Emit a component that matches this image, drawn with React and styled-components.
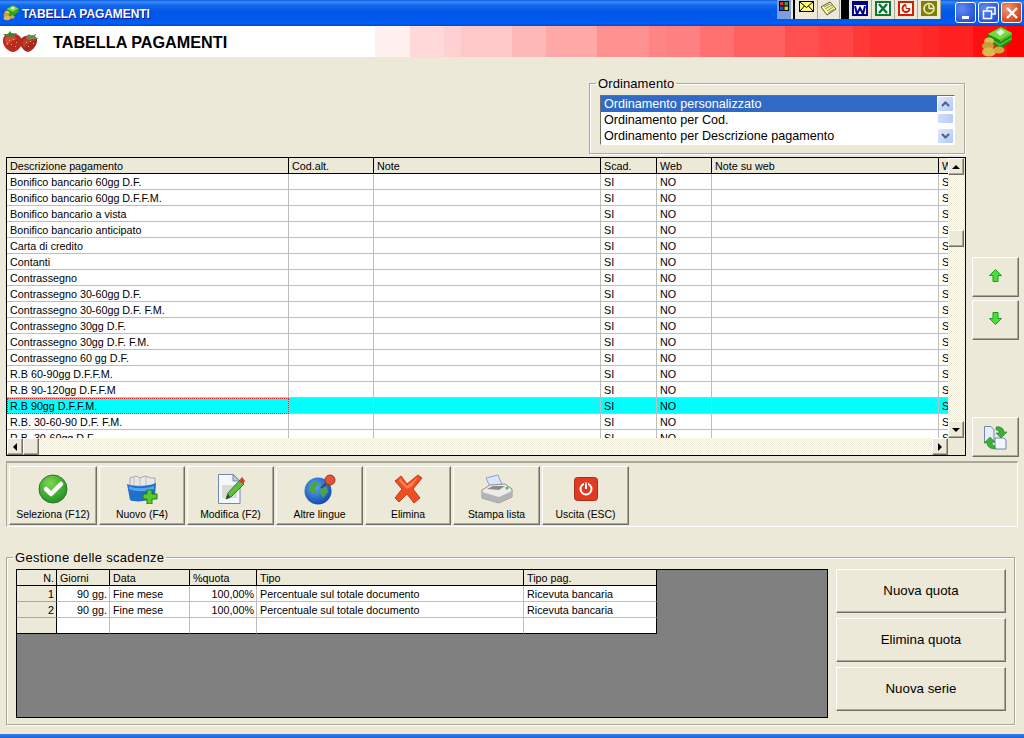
import React from 'react'
import styled, { createGlobalStyle } from 'styled-components'

const GlobalStyle = createGlobalStyle`
    html, body {
        margin: 0;
        padding: 0;
        background: #ECE9D8;
    }
    * {
        box-sizing: border-box;
    }
`

const FONT = `"Liberation Sans", Arial, sans-serif`
const DITHER = `repeating-conic-gradient(#ECE9D8 0 25%, #fff 0 50%) 0 0 / 2px 2px`

const HEADER_STEPS = [
    ['#FFFFFF', 375], ['#FFF0F0', 410], ['#FFD9D9', 444], ['#FFD0D0', 461], ['#FFC8C8', 512],
    ['#FFB8B8', 546], ['#FFA8A8', 597], ['#FF9090', 649], ['#FF8585', 666], ['#FF8080', 700],
    ['#FF7070', 734], ['#FF6060', 785], ['#FF5050', 819], ['#FF4545', 853], ['#FF3838', 870],
    ['#FF3030', 922], ['#FF2828', 939], ['#FF2020', 973], ['#FF1010', 1007], ['#FF0000', 1024],
]

const headerGradient = () => {
    let from = 0
    const parts = HEADER_STEPS.map(([color, to]) => {
        const part = `${color} ${from}px ${to}px`
        from = to
        return part
    })
    return `linear-gradient(90deg, ${parts.join(', ')})`
}

const payments = [
    'Bonifico bancario 60gg D.F.',
    'Bonifico bancario 60gg D.F.F.M.',
    'Bonifico bancario a vista',
    'Bonifico bancario anticipato',
    'Carta di credito',
    'Contanti',
    'Contrassegno',
    'Contrassegno 30-60gg D.F.',
    'Contrassegno 30-60gg D.F. F.M.',
    'Contrassegno 30gg D.F.',
    'Contrassegno 30gg D.F. F.M.',
    'Contrassegno 60 gg D.F.',
    'R.B 60-90gg D.F.F.M.',
    'R.B 90-120gg D.F.F.M',
    'R.B 90gg D.F.F.M.',
    'R.B. 30-60-90 D.F. F.M.',
    'R.B. 30-60gg D.F.',
]

const mainCols = [282, 85, 227, 56, 55, 227, 10]
const quotaCols = [40, 53, 80, 67, 267, 133]

const StrawberryIcon = () => (
    <svg width="38" height="22" viewBox="0 0 38 22">
        <path d="M21 6 C27 3 34 4 35 8 C36 13 31 20 26 21 C21 20 17 14 18 9Z" fill="#A8281C" />
        <path d="M22 8 C26 6 31 7 33 9 C29 10 25 13 22 17 C20 14 20 10 22 8Z" fill="#C43A28" />
        <path d="M24 6 L27 3 L29 5 L34 3 L33 6 L37 8 L31 8 L28 9 L25 8Z" fill="#6E8A4C" />
        <path d="M5 3 C11 1 19 4 20 9 C21 14 16 21 11 21 C6 21 0 14 1 9 C1 6 3 4 5 3Z" fill="#B82C1E" />
        <path d="M5 5 C9 4 13 5 15 8 C11 9 7 12 5 15 C3 12 2 7 5 5Z" fill="#D84830" />
        <path d="M1 3 L6 3 L8 0 L10 3 L15 2 L13 5 L9 6 L5 6Z" fill="#4F7C30" />
        <path d="M7 9h1v1H7z M11 8h1v1h-1z M14 11h1v1h-1z M9 13h1v1H9z M13 15h1v1h-1z M5 12h1v1H5z M24 11h1v1h-1z M28 10h1v1h-1z M31 12h1v1h-1z M26 15h1v1h-1z" fill="#F0B090" />
    </svg>
)

const MoneyIcon = ({ size = 32 }) => (
    <svg width={size} height={size} viewBox="0 0 32 32">
        <path d="M7 8 L20 1 L31 7 L31 15 L19 23 L7 15Z" fill="#1F8A16" />
        <path d="M7 8 L20 1 L31 7 L19 14Z" fill="#6FDC3C" />
        <path d="M15 6 L20 3 L24 6 L19 10Z" fill="#E4EEDC" />
        <path d="M19 14 L31 7 L31 9 L19 16Z M19 18 L31 11 L31 13 L19 20Z" fill="#52C030" />
        <path d="M7 11 L19 18 L19 20 L7 13Z" fill="#52C030" />
        <ellipse cx="8" cy="15" rx="5" ry="3.500" fill="#E0BE52" />
        <ellipse cx="7" cy="20" rx="6" ry="4" fill="#C89E36" />
        <ellipse cx="8" cy="26" rx="7" ry="4.500" fill="#DDB84A" />
        <ellipse cx="18" cy="24" rx="5.500" ry="3.500" fill="#CFA93C" />
    </svg>
)

const WindowsFlag = () => (
    <svg width="10" height="10" viewBox="0 0 10 10">
        <rect width="10" height="10" fill="#000" />
        <rect x="1" y="1" width="3.500" height="3.500" fill="#E03020" />
        <rect x="5.500" y="1" width="3.500" height="3.500" fill="#30A040" />
        <rect x="1" y="5.500" width="3.500" height="3.500" fill="#2050D0" />
        <rect x="5.500" y="5.500" width="3.500" height="3.500" fill="#E8C820" />
    </svg>
)

const MailIcon = () => (
    <svg width="15" height="11" viewBox="0 0 15 11">
        <rect x=".5" y=".5" width="14" height="10" fill="#FFFF80" stroke="#000" />
        <path d="M1 1 L7.5 6.500 L14 1 M1 10 L5.500 5 M14 10 L9.500 5" fill="none" stroke="#000" />
    </svg>
)

const NoteIcon = () => (
    <svg width="17" height="15" viewBox="0 0 17 15">
        <path d="M1 6 L10 1 L16 8 L7 14Z" fill="#FFFF80" stroke="#555" />
        <path d="M4 6 L10 3 M5 8 L12 4 M7 10 L13 6 M8 12 L14 8" stroke="#888" />
    </svg>
)

const WordIcon = () => (
    <svg width="16" height="15" viewBox="0 0 16 15">
        <rect x="1" y="1" width="14" height="13" fill="#fff" stroke="#00008B" strokeWidth="2" />
        <rect x="1" y="1" width="14" height="3" fill="#00008B" />
        <path d="M3 5 L5 13 L8 7 L11 13 L13 5" fill="none" stroke="#00008B" strokeWidth="2" />
    </svg>
)

const ExcelIcon = () => (
    <svg width="16" height="15" viewBox="0 0 16 15">
        <rect x="1" y="1" width="14" height="13" fill="#fff" stroke="#0A7A30" strokeWidth="2" />
        <path d="M4 3 L12 12 M12 3 L4 12" stroke="#0A7A30" strokeWidth="2.500" />
    </svg>
)

const PptIcon = () => (
    <svg width="16" height="15" viewBox="0 0 16 15">
        <rect x="1" y="1" width="14" height="13" fill="#fff" stroke="#D02000" strokeWidth="2" />
        <circle cx="8" cy="7.500" r="3.500" fill="none" stroke="#D02000" strokeWidth="2" />
        <path d="M8 7.500 V3 H13 V7.500Z" fill="#fff" />
        <path d="M8 4 V7.500 H12" fill="none" stroke="#D02000" />
    </svg>
)

const ChartIcon = () => (
    <svg width="16" height="15" viewBox="0 0 16 15">
        <rect width="16" height="15" fill="#808000" />
        <circle cx="8" cy="7.500" r="5" fill="#808000" stroke="#F0F0D8" strokeWidth="1.500" />
        <path d="M8 7.500 V3.500 M8 7.500 H12" stroke="#F0F0D8" strokeWidth="1.500" />
    </svg>
)

const CheckIcon = () => (
    <svg width="30" height="30" viewBox="0 0 30 30">
        <defs>
            <radialGradient id="chk" cx=".4" cy=".3" r=".8">
                <stop offset="0" stopColor="#7ED64E" />
                <stop offset="1" stopColor="#148A1E" />
            </radialGradient>
        </defs>
        <circle cx="15" cy="15" r="14" fill="url(#chk)" stroke="#2A7A28" />
        <path d="M8 15 L13 20 L23 10" fill="none" stroke="#fff" strokeWidth="4.500" strokeLinejoin="round" strokeLinecap="round" />
    </svg>
)

const NewIcon = () => (
    <svg width="32" height="30" viewBox="0 0 32 30">
        <path d="M4 4 L10 2 L14 4 L19 2 L25 4 L29 4 L29 12 L4 12Z" fill="#E8E8E8" stroke="#A8A8A8" />
        <path d="M8 2 V11 M14 3 V11 M20 3 V11" stroke="#BDBDBD" />
        <path d="M1 10 C8 13 20 13 30 9 L29 22 C26 27 10 29 4 26Z" fill="#1E6FD0" />
        <path d="M3 12 C10 15 18 15 28 12 L28 15 C18 18 10 18 3 15Z" fill="#5AA4EE" />
        <path d="M21 16 H26 V20 H31 V25 H26 V30 H21 V25 H17 V20 H21Z" fill="#5BC82C" stroke="#1E7E14" />
    </svg>
)

const EditIcon = () => (
    <svg width="28" height="30" viewBox="0 0 28 30">
        <path d="M1.500 .5 H16 L23 7 V29.500 H1.500Z" fill="#F4F7FC" stroke="#7288B4" />
        <path d="M16 .5 V7 H23Z" fill="#BCCBE6" stroke="#7288B4" />
        <rect x="5" y="11" width="15" height="13" fill="#D9DBD8" />
        <path d="M9 25 L11 19 L23 6 L27 10 L14 23Z" fill="#5FBE3C" stroke="#2F7E22" />
        <path d="M22 7 L25 3 L28 7 L26 10Z" fill="#D83A24" />
        <path d="M9 25 L11 20 L13 23Z" fill="#3B3B3B" />
    </svg>
)

const GlobeIcon = () => (
    <svg width="32" height="31" viewBox="0 0 32 31">
        <defs>
            <radialGradient id="glb" cx=".4" cy=".35" r=".75">
                <stop offset="0" stopColor="#58A8F0" />
                <stop offset="1" stopColor="#0A3FA8" />
            </radialGradient>
        </defs>
        <circle cx="14" cy="17" r="13.500" fill="url(#glb)" />
        <path d="M5 11 L12 7 L15 10 L11 14 L13 18 L9 20 L5 16Z M17 14 L23 13 L24 18 L19 24 L16 19Z" fill="#4EA24A" />
        <path d="M17 14 L25 7" stroke="#444" strokeWidth="2" />
        <circle cx="26" cy="6" r="5" fill="#E0563A" stroke="#B03020" />
    </svg>
)

const DeleteIcon = () => (
    <svg width="30" height="30" viewBox="0 0 30 30">
        <path d="M2 7 L8 2 L14 10 L25 1 L29 4 L20 15 L27 24 L21 29 L14 20 L6 28 L2 24 L9 15Z" fill="#EE4E22" stroke="#C83A18" />
        <path d="M7 4 L14 12 L25 3 L19 12 L14 15 L6 7Z" fill="#FF8056" />
    </svg>
)

const PrinterIcon = () => (
    <svg width="32" height="30" viewBox="0 0 32 30">
        <path d="M5 4 L17 1 L22 13 L10 15Z" fill="#D7E6FA" stroke="#8AA2C4" />
        <path d="M1 16 L9 11 L24 10 L31 15 L31 23 L18 29 L1 24Z" fill="#ECECEC" stroke="#8E8E8E" />
        <path d="M1 18 L18 23 L31 17 L31 23 L18 29 L1 24Z" fill="#B4B4B4" />
        <path d="M6 15 L12 12 L24 12 L18 16Z" fill="#8C8C8C" />
        <circle cx="26" cy="14" r="1.500" fill="#3CC03C" />
    </svg>
)

const PowerIcon = () => (
    <svg width="24" height="24" viewBox="0 0 24 24">
        <rect width="23" height="23" x=".5" y=".5" rx="3" fill="#E03A22" stroke="#B02A18" />
        <circle cx="12" cy="12" r="5.500" fill="none" stroke="#fff" strokeWidth="2" />
        <path d="M12 6 V12" stroke="#E03A22" strokeWidth="4" />
        <path d="M12 6.500 V12" stroke="#fff" strokeWidth="2" />
    </svg>
)

const ArrowIcon = ({ down }) => (
    <svg width="13" height="13" viewBox="0 0 13 13">
        <path
            d={down
                ? 'M6.500 12.500 L.5 6.500 H4 V.5 H9 V6.500 H12.500Z'
                : 'M6.500 .5 L12.500 6.500 H9 V12.500 H4 V6.500 H.5Z'}
            fill="#4CDC3C"
            stroke="#18A018"
        />
    </svg>
)

const RefreshIcon = () => (
    <svg width="24" height="24" viewBox="0 0 24 24">
        <path d="M.5 .5 H7 L10 4 V16 H.5Z" fill="#E8EEF8" stroke="#6E86B8" />
        <path d="M11 12 H20 L22 14 V23 H11Z" fill="#F2F5FB" stroke="#6E86B8" />
        <path d="M12 1 C17 0 20 3 20 6 H23 L17 12 L12 7 H15 C15 5 14 4 12 4Z" fill="#3AB03A" stroke="#187018" strokeWidth=".5" />
        <path d="M11 23 C6 23 3 20 3 17 H0 L6 11 L11 16 H8 C8 18 9 20 11 20Z" fill="#3AB03A" stroke="#187018" strokeWidth=".5" />
    </svg>
)

const tools = [
    { label: 'Seleziona (F12)', icon: <CheckIcon />, width: 88 },
    { label: 'Nuovo (F4)', icon: <NewIcon />, width: 86 },
    { label: 'Modifica (F2)', icon: <EditIcon />, width: 87 },
    { label: 'Altre lingue', icon: <GlobeIcon />, width: 87 },
    { label: 'Elimina', icon: <DeleteIcon />, width: 86 },
    { label: 'Stampa lista', icon: <PrinterIcon />, width: 87 },
    { label: 'Uscita (ESC)', icon: <PowerIcon />, width: 87 },
]

function ColGroup({ cols }) {
    return (
        <colgroup>
            {cols.map((w, i) => <Col key={i} $w={w} />)}
        </colgroup>
    )
}

export default function App() {
    return (
        <>
            <GlobalStyle />
            <Page>
                <TitleBar>
                    <MoneyIcon size={16} />
                    <TitleText>TABELLA PAGAMENTI</TitleText>
                    <Tray>
                        <FlagCell><WindowsFlag /></FlagCell>
                        <BlackGap $w={2} $left={2} $right={1} />
                        <TrayButton $w={22}><MailIcon /></TrayButton>
                        <TrayButton $w={22}><NoteIcon /></TrayButton>
                        <BlackGap $w={8} $left={1} />
                        <TrayButton $w={23}><WordIcon /></TrayButton>
                        <TrayButton $w={23}><ExcelIcon /></TrayButton>
                        <TrayButton $w={23}><PptIcon /></TrayButton>
                        <TrayButton $w={23}><ChartIcon /></TrayButton>
                    </Tray>
                    <WindowButtons>
                        <WindowButton>
                            <svg width="12" height="12" viewBox="0 0 12 12"><rect x="2" y="9" width="7" height="3" fill="#fff" /></svg>
                        </WindowButton>
                        <WindowButton>
                            <svg width="14" height="14" viewBox="0 0 14 14">
                                <path d="M5 1.500 H13 V8 H10 M5 1.500 V4" fill="none" stroke="#fff" strokeWidth="1.500" />
                                <rect x="1.500" y="5" width="8" height="7.500" fill="none" stroke="#fff" strokeWidth="1.500" />
                            </svg>
                        </WindowButton>
                        <CloseButton>
                            <svg width="14" height="14" viewBox="0 0 14 14"><path d="M2 2 L12 12 M12 2 L2 12" stroke="#fff" strokeWidth="2.400" /></svg>
                        </CloseButton>
                    </WindowButtons>
                </TitleBar>

                <AppHeader>
                    <StrawberryIcon />
                    <HeaderTitle>TABELLA PAGAMENTI</HeaderTitle>
                    <HeaderLogo><MoneyIcon /></HeaderLogo>
                </AppHeader>

                <Content>
                    <OrderRow>
                        <OrderGroup>
                            <OrderLegend>Ordinamento</OrderLegend>
                            <ListBox>
                                <ListItems>
                                    <ListItem $selected>Ordinamento personalizzato</ListItem>
                                    <ListItem>Ordinamento per Cod.</ListItem>
                                    <ListItem>Ordinamento per Descrizione pagamento</ListItem>
                                </ListItems>
                                <ListScroll>
                                    <XpScrollBtn>
                                        <svg width="9" height="6" viewBox="0 0 9 6"><path d="M1 5 L4.500 1.500 L8 5" fill="none" stroke="#4D6185" strokeWidth="2" /></svg>
                                    </XpScrollBtn>
                                    <XpThumb />
                                    <XpScrollBtn $last>
                                        <svg width="9" height="6" viewBox="0 0 9 6"><path d="M1 1 L4.500 4.500 L8 1" fill="none" stroke="#4D6185" strokeWidth="2" /></svg>
                                    </XpScrollBtn>
                                </ListScroll>
                            </ListBox>
                        </OrderGroup>
                    </OrderRow>

                    <GridRow>
                        <GridView>
                            <GridTop>
                                <GridClip>
                                    <DataTable>
                                        <ColGroup cols={mainCols} />
                                        <thead>
                                            <tr>
                                                <HeadCell>Descrizione pagamento</HeadCell>
                                                <HeadCell>Cod.alt.</HeadCell>
                                                <HeadCell>Note</HeadCell>
                                                <HeadCell>Scad.</HeadCell>
                                                <HeadCell>Web</HeadCell>
                                                <HeadCell>Note su web</HeadCell>
                                                <HeadCell>W</HeadCell>
                                            </tr>
                                        </thead>
                                        <tbody>
                                            {payments.map((name, i) => {
                                                const current = i === 14
                                                return (
                                                    <tr key={name}>
                                                        <BodyCell $current={current} $focus={current}>{name}</BodyCell>
                                                        <BodyCell $current={current} />
                                                        <BodyCell $current={current} />
                                                        <BodyCell $current={current}>SI</BodyCell>
                                                        <BodyCell $current={current}>NO</BodyCell>
                                                        <BodyCell $current={current} />
                                                        <BodyCell $current={current}>S</BodyCell>
                                                    </tr>
                                                )
                                            })}
                                        </tbody>
                                    </DataTable>
                                </GridClip>
                                <VScroll>
                                    <ClassicBtn><ArrowGlyph $dir="up" /></ClassicBtn>
                                    <VTrack>
                                        <VThumb />
                                    </VTrack>
                                    <ClassicBtn><ArrowGlyph $dir="down" /></ClassicBtn>
                                </VScroll>
                            </GridTop>
                            <HScroll>
                                <ClassicBtn><ArrowGlyph $dir="left" /></ClassicBtn>
                                <HThumb />
                                <HTrack />
                                <ClassicBtn><ArrowGlyph $dir="right" /></ClassicBtn>
                                <Corner />
                            </HScroll>
                        </GridView>
                        <SideColumn>
                            <SideButton $lift={3}><ArrowIcon /></SideButton>
                            <SideButton $lift={3}><ArrowIcon down /></SideButton>
                            <SideSpacer />
                            <SideButton $drop={2}><RefreshIcon /></SideButton>
                        </SideColumn>
                    </GridRow>

                    <Toolbar>
                        {tools.map(t => (
                            <ToolButton key={t.label} $w={t.width}>
                                <ToolIcon>{t.icon}</ToolIcon>
                                <span>{t.label}</span>
                            </ToolButton>
                        ))}
                    </Toolbar>

                    <DueGroup>
                        <DueLegend>Gestione delle scadenze</DueLegend>
                        <DueBody>
                            <GreyPane>
                                <QuotaTable>
                                    <ColGroup cols={quotaCols} />
                                    <thead>
                                        <tr>
                                            <HeadCell $right>N.</HeadCell>
                                            <HeadCell>Giorni</HeadCell>
                                            <HeadCell>Data</HeadCell>
                                            <HeadCell>%quota</HeadCell>
                                            <HeadCell>Tipo</HeadCell>
                                            <HeadCell>Tipo pag.</HeadCell>
                                        </tr>
                                    </thead>
                                    <tbody>
                                        {[1, 2].map(n => (
                                            <tr key={n}>
                                                <RowHead>{n}</RowHead>
                                                <BodyCell $right>90 gg.</BodyCell>
                                                <BodyCell>Fine mese</BodyCell>
                                                <BodyCell $right>100,00%</BodyCell>
                                                <BodyCell>Percentuale sul totale documento</BodyCell>
                                                <BodyCell>Ricevuta bancaria</BodyCell>
                                            </tr>
                                        ))}
                                        <tr>
                                            <RowHead />
                                            <BodyCell /><BodyCell /><BodyCell /><BodyCell /><BodyCell />
                                        </tr>
                                    </tbody>
                                </QuotaTable>
                            </GreyPane>
                            <QuotaButtons>
                                <QuotaButton>Nuova quota</QuotaButton>
                                <QuotaButton>Elimina quota</QuotaButton>
                                <QuotaButton>Nuova serie</QuotaButton>
                            </QuotaButtons>
                        </DueBody>
                    </DueGroup>
                </Content>
                <BottomEdge />
            </Page>
        </>
    )
}

const raised = `
    background: #ECE9D8;
    border: 1px solid;
    border-color: #fff #716F64 #716F64 #fff;
    box-shadow: inset -1px -1px 0 #ACA899;
`

const Col = styled.col`
    width: ${p => p.$w}px;
`

const Page = styled.div`
    width: 1024px;
    height: 738px;
    display: flex;
    flex-direction: column;
    overflow: hidden;
    background: #ECE9D8;
    font-family: ${FONT};
    color: #000;
`

const TitleBar = styled.div`
    height: 26px;
    flex: none;
    display: flex;
    align-items: flex-start;
    padding: 5px 2px 0 3px;
    gap: 3px;
    background: linear-gradient(180deg, #0A5AE0 0, #3C8CF5 2px, #1468EC 5px, #0058E8 12px, #0058EE 20px, #0060F8 23px, #0048D0 26px);
`

const TitleText = styled.div`
    font: bold 12px/16px ${FONT};
    color: #fff;
    text-shadow: 1px 1px 0 #0F1089;
    letter-spacing: -.08px;
    white-space: nowrap;
    padding-top: 1px;
`

const Tray = styled.div`
    display: flex;
    height: 19px;
    margin: -5px 0 0 auto;
    background: #ECE9D8;
`

const FlagCell = styled.div`
    width: 14px;
    padding-top: 1px;
    background: #7C9DE0;
    display: flex;
    justify-content: center;
`

const BlackGap = styled.div`
    width: ${p => p.$w}px;
    background: #000;
    margin-left: ${p => p.$left || 0}px;
    margin-right: ${p => p.$right || 0}px;
`

const TrayButton = styled.div`
    width: ${p => p.$w}px;
    padding-top: 1px;
    background: #ECE9D8;
    border-right: 1px solid #ACA899;
    display: flex;
    justify-content: center;
`

const WindowButtons = styled.div`
    display: flex;
    gap: 2px;
    margin: -3px 0 0 11px;
`

const WindowButton = styled.div`
    width: 21px;
    height: 21px;
    border: 1px solid #fff;
    border-radius: 3px;
    background: radial-gradient(circle at 30% 30%, #5E8CF0, #2450D8 80%);
    display: flex;
    align-items: center;
    justify-content: center;
`

const CloseButton = styled(WindowButton)`
    background: radial-gradient(circle at 30% 30%, #F09878, #D03C14 80%);
`

const AppHeader = styled.div`
    height: 31px;
    flex: none;
    display: flex;
    align-items: center;
    padding-left: 2px;
    background: ${headerGradient()};
`

const HeaderTitle = styled.h1`
    margin: 0 0 0 13px;
    font: bold 16.200px/20px ${FONT};
`

const HeaderLogo = styled.div`
    margin-left: auto;
    margin-right: 11px;
    display: flex;
`

const Content = styled.div`
    flex: 1;
    display: flex;
    flex-direction: column;
    padding: 19px 5px 0 6px;
    min-height: 0;
`

const OrderRow = styled.div`
    display: flex;
    justify-content: flex-end;
    padding-right: 54px;
    height: 81px;
    flex: none;
`

const OrderGroup = styled.fieldset`
    margin: 0;
    padding: 0 9px 0 10px;
    width: 376px;
    height: 78px;
    border: 1px solid #ACA899;
    box-shadow: inset 1px 1px 0 #fff, 1px 1px 0 #fff;
`

const OrderLegend = styled.legend`
    font: 13px/15px ${FONT};
    letter-spacing: .1px;
    padding: 0 2px;
    margin-left: -4px;
`

const ListBox = styled.div`
    height: 50px;
    display: flex;
    background: #fff;
    border: 1px solid;
    border-color: #716F64 #fff #fff #716F64;
    margin-top: 4px;
`

const ListItems = styled.div`
    flex: 1;
    overflow: hidden;
`

const ListItem = styled.div`
    height: 16px;
    font: 12.600px/16px ${FONT};
    padding-left: 3px;
    background: ${p => (p.$selected ? '#316AC5' : 'transparent')};
    color: ${p => (p.$selected ? '#fff' : '#000')};
`

const ListScroll = styled.div`
    width: 17px;
    display: flex;
    flex-direction: column;
    background: #FDFDFA;
`

const XpScrollBtn = styled.div`
    height: 16px;
    flex: none;
    border: 1px solid #fff;
    border-radius: 2px;
    background: linear-gradient(135deg, #E1EAFE, #AEC8F7);
    display: flex;
    align-items: center;
    justify-content: center;
    margin-top: ${p => (p.$last ? 'auto' : '0')};
`

const XpThumb = styled.div`
    height: 11px;
    flex: none;
    margin-top: 1px;
    border-radius: 2px;
    background: linear-gradient(90deg, #D0DDFA, #B8CCF6);
    border: 1px solid #fff;
`

const GridRow = styled.div`
    display: flex;
    height: 300px;
    flex: none;
    gap: 6px;
`

const GridView = styled.div`
    width: 960px;
    height: 299px;
    flex: none;
    display: flex;
    flex-direction: column;
    border: 1px solid #000;
    background: #ECE9D8;
`

const GridTop = styled.div`
    flex: 1;
    display: flex;
    min-height: 0;
`

const GridClip = styled.div`
    flex: 1;
    overflow: hidden;
    background: #fff;
`

const DataTable = styled.table`
    table-layout: fixed;
    width: 942px;
    border-collapse: separate;
    border-spacing: 0;
    font: 10.750px/14px ${FONT};
`

const HeadCell = styled.th`
    height: 16px;
    padding: 1px 2px 0 3px;
    background: #ECE9D8;
    font-weight: normal;
    text-align: ${p => (p.$right ? 'right' : 'left')};
    border-right: 1px solid #000;
    border-bottom: 1px solid #000;
    overflow: hidden;
    white-space: nowrap;
    &:last-child {
        border-right: none;
    }
`

const BodyCell = styled.td`
    height: 16px;
    padding: 1px 2px 0 3px;
    border-right: 1px solid #BEBEBE;
    border-bottom: 1px solid #BEBEBE;
    background: ${p => (p.$current ? '#00FFFF' : '#fff')};
    text-align: ${p => (p.$right ? 'right' : 'left')};
    overflow: hidden;
    white-space: nowrap;
    outline: ${p => (p.$focus ? '1px dotted #E02020' : 'none')};
    outline-offset: -1px;
    &:last-child {
        border-right: none;
    }
`

const RowHead = styled.td`
    height: 16px;
    padding: 1px 2px 0 0;
    background: #ECE9D8;
    text-align: right;
    border-right: 1px solid #000;
    border-bottom: 1px solid #ACA899;
`

const VScroll = styled.div`
    width: 17px;
    flex: none;
    display: flex;
    flex-direction: column;
`

const ClassicBtn = styled.div`
    width: 16px;
    height: 17px;
    flex: none;
    ${raised}
    display: flex;
    align-items: center;
    justify-content: center;
`

const ArrowGlyph = styled.span`
    width: 0;
    height: 0;
    border-style: solid;
    border-color: transparent;
    ${p => p.$dir === 'up' && 'border-width: 0 4px 4px; border-bottom-color: #000;'}
    ${p => p.$dir === 'down' && 'border-width: 4px 4px 0; border-top-color: #000;'}
    ${p => p.$dir === 'left' && 'border-width: 4px 4px 4px 0; border-right-color: #000;'}
    ${p => p.$dir === 'right' && 'border-width: 4px 0 4px 4px; border-left-color: #000;'}
`

const VTrack = styled.div`
    flex: 1;
    background: ${DITHER};
    padding-top: 55px;
`

const VThumb = styled.div`
    height: 17px;
    width: 16px;
    ${raised}
`

const HScroll = styled.div`
    height: 17px;
    flex: none;
    display: flex;
`

const HThumb = styled.div`
    width: 16px;
    height: 17px;
    ${raised}
`

const HTrack = styled.div`
    flex: 1;
    background: ${DITHER};
`

const Corner = styled.div`
    width: 17px;
    background: #ECE9D8;
`

const SideColumn = styled.div`
    width: 47px;
    flex: none;
    display: flex;
    flex-direction: column;
    gap: 3px;
    padding-top: 100px;
`

const SideSpacer = styled.div`
    flex: 1;
`

const SideButton = styled.div`
    height: 40px;
    flex: none;
    ${raised}
    display: flex;
    align-items: center;
    justify-content: center;
    padding-bottom: ${p => p.$lift || 0}px;
    padding-top: ${p => p.$drop || 0}px;
`

const Toolbar = styled.div`
    height: 66px;
    width: 1012px;
    flex: none;
    margin-top: 4px;
    padding: 3px 2px 0;
    display: flex;
    gap: 2px;
    border: 1px solid;
    border-color: #ACA899 #fff #fff #ACA899;
    border-top: 2px solid #ACA899;
`

const ToolButton = styled.div`
    width: ${p => p.$w}px;
    height: 59px;
    flex: none;
    ${raised}
    display: flex;
    flex-direction: column;
    align-items: center;
    font: 10.400px/14px ${FONT};
`

const ToolIcon = styled.div`
    height: 41px;
    display: flex;
    align-items: center;
    justify-content: center;
    padding-top: 3px;
`

const DueGroup = styled.fieldset`
    margin: 23px 0 0;
    padding: 0 8px 0 9px;
    width: 1009px;
    height: 175px;
    flex: none;
    border: 1px solid #ACA899;
    box-shadow: inset 1px 1px 0 #fff, 1px 1px 0 #fff;
`

const DueLegend = styled.legend`
    font: 13px/15px ${FONT};
    letter-spacing: .3px;
    padding: 0 2px;
    margin-left: -3px;
`

const DueBody = styled.div`
    display: flex;
    gap: 8px;
    margin-top: 4px;
`

const GreyPane = styled.div`
    width: 812px;
    height: 149px;
    flex: none;
    background: #808080;
    border: 1px solid #000;
`

const QuotaTable = styled.table`
    table-layout: fixed;
    width: 640px;
    border-collapse: separate;
    border-spacing: 0;
    font: 10.750px/14px ${FONT};
    tr:last-child td {
        border-bottom-color: #000;
    }
    th:last-child, td:last-child {
        border-right: 1px solid #000;
    }
`

const QuotaButtons = styled.div`
    flex: 1;
    display: flex;
    flex-direction: column;
    gap: 5px;
`

const QuotaButton = styled.div`
    height: 44px;
    ${raised}
    display: flex;
    align-items: center;
    justify-content: center;
    font: 13.300px/16px ${FONT};
`

const BottomEdge = styled.div`
    height: 4px;
    flex: none;
    background: linear-gradient(180deg, #3A7FE8, #1F62D8);
`
